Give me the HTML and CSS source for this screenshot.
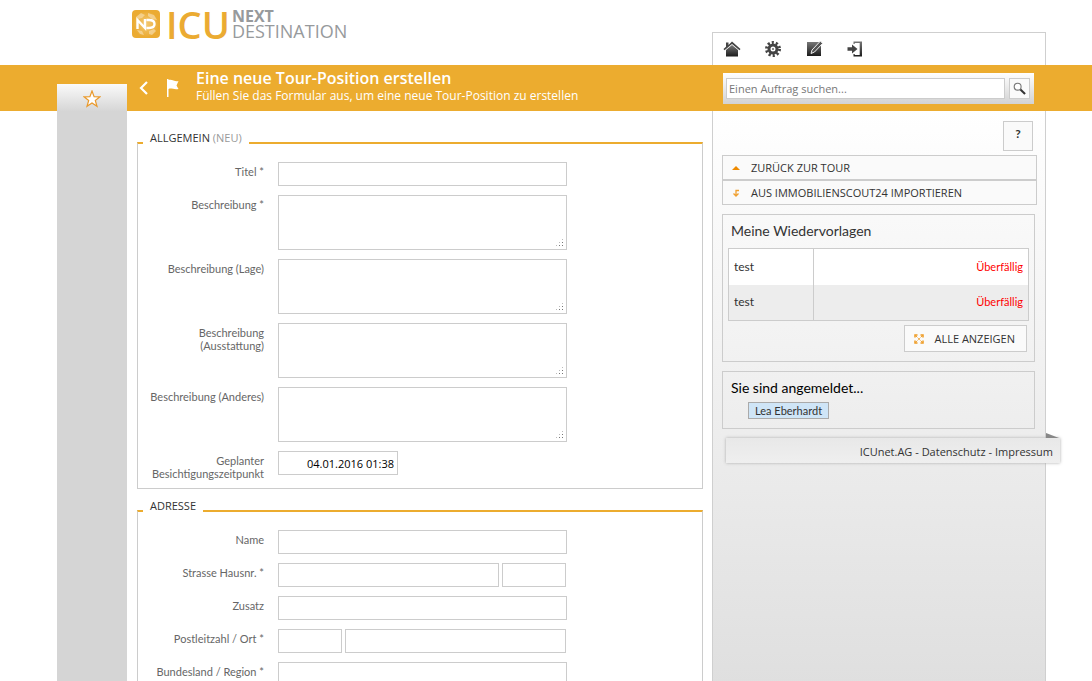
FILE: index.html
```html
<!DOCTYPE html>
<html lang="de">
<head>
<meta charset="utf-8">
<title>Eine neue Tour-Position erstellen</title>
<link rel="stylesheet" href="styles.css">
</head>
<body>
<div class="page">
  <header class="top">
    <a class="logo" href="#" aria-label="ICU Next Destination">
      <svg class="logo-mark" viewBox="0 0 30 30" aria-hidden="true">
        <defs>
          <radialGradient id="glow"><stop offset="0" stop-color="#f3c976"/><stop offset="1" stop-color="#ebab32"/></radialGradient>
        </defs>
        <rect x="1" y="1" width="28" height="28" rx="4" fill="#ebab32"/>
        <circle cx="15" cy="15" r="13" fill="url(#glow)"/>
        <path d="M5 8l5-4 4 2-3 3-4 1zM17 4l6 2 3 5-5-1-4-3zM6 21l5 1 2 4-4-1zM18 22l5-2 2 2-4 4-3-1z" fill="#f7dca8" opacity=".7"/>
        <path d="M6.500 20V11l7.500 8V10M15.500 11h2.500c3.500 0 5.500 1.500 5.500 4s-2 4-5.500 4h-2.500" fill="none" stroke="#fff" stroke-width="2.400"/>
      </svg>
      <span class="logo-icu">ICU</span>
      <span class="logo-name"><b>NEXT</b><span>DESTINATION</span></span>
    </a>
    <nav class="tools" aria-label="Werkzeuge">
      <a href="#" aria-label="Startseite"><svg viewBox="0 0 18 18"><defs><linearGradient id="ink" x2="0" y2="1"><stop offset="0" stop-color="#777"/><stop offset="1" stop-color="#1c1c1c"/></linearGradient></defs><path d="M3 2.500h2.500V5L9 1.500 17.500 9l-1 1.200L9 4 1.500 10.200.500 9 3 6.800z" fill="#444"/><path d="M3 10l6-5 6 5v6.500H3z" fill="url(#ink)"/></svg></a>
      <a href="#" aria-label="Einstellungen"><svg viewBox="0 0 18 18"><circle cx="9" cy="9" r="6.500" fill="none" stroke="#444" stroke-width="3" stroke-dasharray="2.100 1.984"/><circle cx="9" cy="9" r="4" fill="none" stroke="#444" stroke-width="3"/><circle cx="9" cy="9" r="1" fill="#666"/></svg></a>
      <a href="#" aria-label="Bearbeiten"><svg viewBox="0 0 18 18"><path d="M2 2h14v14H2z" fill="url(#ink)"/><path d="M15.500 1l2 2.500L9.500 12 6 13.500 7 10z" fill="#555" stroke="#eee" stroke-width="1"/></svg></a>
      <a href="#" aria-label="Abmelden"><svg viewBox="0 0 18 18"><path d="M7.500 1.500H16v15H7.500V14h1.200v1h5V3h-5v1H7.500z" fill="url(#ink)"/><path d="M1.500 7.200H6V4.500L11.500 9 6 13.500v-2.700H1.500z" fill="#444"/></svg></a>
    </nav>
  </header>

  <div class="bar">
    <a class="star" href="#" aria-label="Favoriten"><svg viewBox="0 0 18 18"><path d="M9 1l2.100 5.600 5.900.2-4.700 3.700 1.700 5.800L9 13l-5 3.300 1.700-5.800L1 6.800l5.900-.2z" fill="#fff" stroke="#e9992b" stroke-width="1.200"/></svg></a>
    <div class="title">
      <a class="back" href="#" aria-label="Zurück"><svg viewBox="0 0 10 14"><path d="M8 1L2 7l6 6" fill="none" stroke="#fff" stroke-width="2.200"/></svg></a>
      <svg class="flag" viewBox="0 0 14 20" aria-hidden="true"><path d="M1 1v18h1.500V11c3-1.500 5 1 10 0l-2-3.500 2-4.500c-4 1-6-2-10-1V1z" fill="#fff"/></svg>
      <div>
        <h1>Eine neue Tour-Position erstellen</h1>
        <p>Füllen Sie das Formular aus, um eine neue Tour-Position zu erstellen</p>
      </div>
    </div>
    <form class="search">
      <input type="search" placeholder="Einen Auftrag suchen..." aria-label="Auftrag suchen">
      <button type="button" aria-label="Suchen"><svg viewBox="0 0 14 14"><circle cx="5" cy="5" r="3.700" fill="#fff" stroke="#777" stroke-width="1.200"/><path d="M8 8l5 5" stroke="#333" stroke-width="2.200"/></svg></button>
    </form>
  </div>

  <div class="body">
    <div class="rail"></div>
    <main class="content">
      <form>
        <fieldset>
          <legend>ALLGEMEIN <span>(NEU)</span></legend>
          <div class="row"><label for="titel">Titel *</label><div class="field"><input id="titel" type="text"></div></div>
          <div class="row"><label for="b1">Beschreibung *</label><div class="field area"><textarea id="b1"></textarea></div></div>
          <div class="row"><label for="b2">Beschreibung (Lage)</label><div class="field area"><textarea id="b2"></textarea></div></div>
          <div class="row"><label for="b3">Beschreibung (Ausstattung)</label><div class="field area"><textarea id="b3"></textarea></div></div>
          <div class="row"><label for="b4">Beschreibung (Anderes)</label><div class="field area"><textarea id="b4"></textarea></div></div>
          <div class="row"><label for="zeit">Geplanter Besichtigungszeitpunkt</label><div class="field"><input class="date" id="zeit" type="text" value="04.01.2016 01:38"></div></div>
        </fieldset>
        <fieldset>
          <legend>ADRESSE</legend>
          <div class="row"><label for="name">Name</label><div class="field"><input id="name" type="text"></div></div>
          <div class="row"><label for="str">Strasse Hausnr. *</label><div class="field pair"><input id="str" type="text"><input class="short" type="text" aria-label="Hausnummer"></div></div>
          <div class="row"><label for="zus">Zusatz</label><div class="field"><input id="zus" type="text"></div></div>
          <div class="row"><label for="plz">Postleitzahl / Ort *</label><div class="field pair"><input class="short" id="plz" type="text"><input type="text" aria-label="Ort"></div></div>
          <div class="row"><label for="land">Bundesland / Region *</label><div class="field"><input id="land" type="text"></div></div>
        </fieldset>
      </form>
    </main>
    <aside class="panel">
      <button class="help" type="button">?</button>
      <div class="actions">
        <a href="#"><svg viewBox="0 0 10 10"><path d="M1 7l4-4 4 4z" fill="#ee8a00"/></svg>ZURÜCK ZUR TOUR</a>
        <a href="#"><svg viewBox="0 0 10 10"><path d="M8 2.500H5v5M2.500 5.500L5 8l2.500-2.500" fill="none" stroke="#f0a030" stroke-width="1.300"/></svg>AUS IMMOBILIENSCOUT24 IMPORTIEREN</a>
      </div>
      <section class="box">
        <h2>Meine Wiedervorlagen</h2>
        <table>
          <tr><td>test</td><td class="due">Überfällig</td></tr>
          <tr><td>test</td><td class="due">Überfällig</td></tr>
        </table>
        <button class="all" type="button"><svg viewBox="0 0 10 10"><path d="M1 3.500V1h2.500M6.500 1H9v2.500M9 6.500V9H6.500M3.500 9H1V6.500" fill="none" stroke="#ee9a20" stroke-width="1.500"/><path d="M2 2l6 6M8 2L2 8" stroke="#f0a030" stroke-dasharray="2 1.200"/></svg>ALLE ANZEIGEN</button>
      </section>
      <section class="box login">
        <h2>Sie sind angemeldet...</h2>
        <a class="user" href="#">Lea Eberhardt</a>
      </section>
      <footer><a href="#">ICUnet.AG</a> - <a href="#">Datenschutz</a> - <a href="#">Impressum</a></footer>
    </aside>
  </div>
</div>
</body>
</html>
```
FILE: styles.css
```css
* { box-sizing: border-box; }
body {
  margin: 0;
  background: #fff;
  color: #333;
  font: 12px/16px "Trebuchet MS", Lato, sans-serif;
}
a { color: inherit; text-decoration: none; }
svg { display: block; }
h1, h2, p { margin: 0; font-weight: 400; }
input, textarea, button { font: inherit; color: inherit; border-radius: 0; }
.page { display: flex; flex-direction: column; min-height: 100vh; }

.top, .bar, .body {
  display: grid;
  grid-template-columns: 70px minmax(0, 1fr) 334px;
  padding: 0 46px 0 57px;
}
.top, .bar, legend, .actions, .all, footer, .field .date { font-family: "Trebuchet MS", "Open Sans", sans-serif; }
legend, .actions, .all, footer, .field .date { font-size: 11px; }
.top { height: 65px; }
.logo {
  grid-column: 1 / 3;
  display: flex;
  align-items: flex-start;
  padding: 9px 0 0 74px;
  color: #979a9c;
}
.logo-mark { width: 30px; height: 30px; }
.logo-icu {
  margin-left: 5px;
  font-size: 38px;
  line-height: 30px;
  font-weight: 600;
  color: #ebab32;
}
.logo-name { display: grid; margin-left: 2px; font-size: 18px; line-height: 15px; }
.logo-name b { font-size: 16px; }
.tools {
  display: flex;
  gap: 23px;
  margin-top: 32px;
  padding: 7px 10px 0;
  border: 1px solid #cfcfcf;
  border-bottom: 0;
}
.tools svg { width: 18px; height: 18px; }

.bar { height: 46px; background: #ecac2f; color: #fff; }
.star {
  align-self: end;
  display: flex;
  justify-content: center;
  height: 27px;
  padding-top: 6px;
  background: linear-gradient(#fafafa, #d6d6d6);
}
.star svg { width: 18px; height: 18px; }
.title { display: flex; align-items: flex-start; padding: 4px 0 0 12px; }
.back { margin-top: 12px; }
.back svg { width: 10px; height: 14px; }
.flag { width: 14px; height: 20px; margin: 9px 16px 0 17px; }
.title h1 { font-size: 16px; line-height: 18px; font-weight: 600; }
.title p { line-height: 17px; }
.search {
  display: flex;
  align-self: start;
  gap: 4px;
  margin: 8px 12px 0 11px;
  padding: 5px 4px 5px 3px;
  background: linear-gradient(#fff, #d2d2d2);
}
.search input {
  flex: 1;
  min-width: 0;
  height: 21px;
  padding: 0 2px;
  border: 1px solid #ccc;
  background: #fff;
  font-size: 11px;
}
.search input::placeholder { color: #777; }
.search button { width: 21px; height: 21px; padding: 3px; border: 1px solid #ccc; background: #fafafa; }

.body { flex: 1; }
.rail { background: #d5d5d5; }
.content { padding: 18px 9px 0 10px; }
fieldset {
  min-width: 0;
  margin: 0 0 8px;
  padding: 6px 12px 0 5px;
  border: 1px solid #ccc;
  border-top: 2px solid #ecac2f;
}
legend { padding: 0 7px 9px; line-height: 18px; }
legend span { color: #999; }
.row { display: flex; gap: 14px; margin-bottom: 9px; }
.row:last-child { margin-bottom: 8px; }
.row label {
  flex: none;
  width: 121px;
  padding-top: 3px;
  font-size: 11px;
  line-height: 13px;
  color: #666;
  text-align: right;
}
.field { position: relative; flex: 0 1 289px; display: flex; gap: 3px; }
.field input, .field textarea {
  display: block;
  width: 100%;
  min-width: 0;
  height: 24px;
  padding: 0 3px;
  border: 1px solid #ccc;
  background: #fff;
}
.field textarea { height: 55px; resize: none; }
.area::after {
  content: "";
  position: absolute;
  right: 3px;
  bottom: 3px;
  width: 9px;
  height: 9px;
  background: radial-gradient(circle, #777 1px, transparent 1px) 0 0 / 3px 3px;
  clip-path: polygon(100% 0, 100% 100%, 0 100%);
}
.pair { padding-right: 1px; }
.field .short { flex: none; width: 64px; }
.field .date { width: 120px; color: #000; text-align: right; }

.panel {
  padding: 10px 11px 0 9px;
  border: 1px solid #cfcfcf;
  border-width: 0 1px;
  background: linear-gradient(#fff, #dedede);
}
.help { display: block; width: 30px; height: 30px; margin: 0 1px 4px auto; padding: 0 0 4px; border: 1px solid #ccc; background: #fafafa; font-weight: 700; }
.actions { margin-right: -3px; }
.actions a {
  display: flex;
  align-items: center;
  gap: 10px;
  height: 25px;
  padding-left: 8px;
  border: 1px solid #ccc;
  background: #fafafa;
}
.actions svg, .all svg { width: 10px; height: 10px; }
.box { margin: 9px -1px 0 0; padding: 7px 5px 9px; border: 1px solid #ccc; }
.box h2 { padding-left: 3px; font-size: 14px; line-height: 18px; }
table { width: 100%; margin-top: 8px; border: 1px solid #ccc; border-collapse: collapse; background: #fff; }
td { height: 36px; padding: 0 5px; }
td:first-child { width: 85px; border-right: 1px solid #ccc; }
tr:last-child { background: #ededed; }
.due { color: #f00; font-size: 11px; text-align: right; }
.all {
  display: flex;
  align-items: center;
  gap: 10px;
  height: 27px;
  margin: 4px 2px 0 auto;
  padding: 0 11px 0 9px;
  border: 1px solid #ccc;
  background: #fafafa;
}
.login h2 { color: #000; }
.user { display: inline-block; margin: 5px 0 0 20px; padding: 0 6px; border: 1px solid #aaa; background: #cfe5f7; font-size: 11px; line-height: 15px; }
footer {
  position: relative;
  margin: 9px -26px 0 4px;
  padding: 6px 7px 3px;
  background: linear-gradient(#e8e8e8, #efefef);
  box-shadow: 0 0 3px #aaa;
  text-align: right;
}
footer::before {
  content: "";
  position: absolute;
  right: 1px;
  top: -5px;
  border-left: 13px solid #888;
  border-top: 5px solid transparent;
}
```
